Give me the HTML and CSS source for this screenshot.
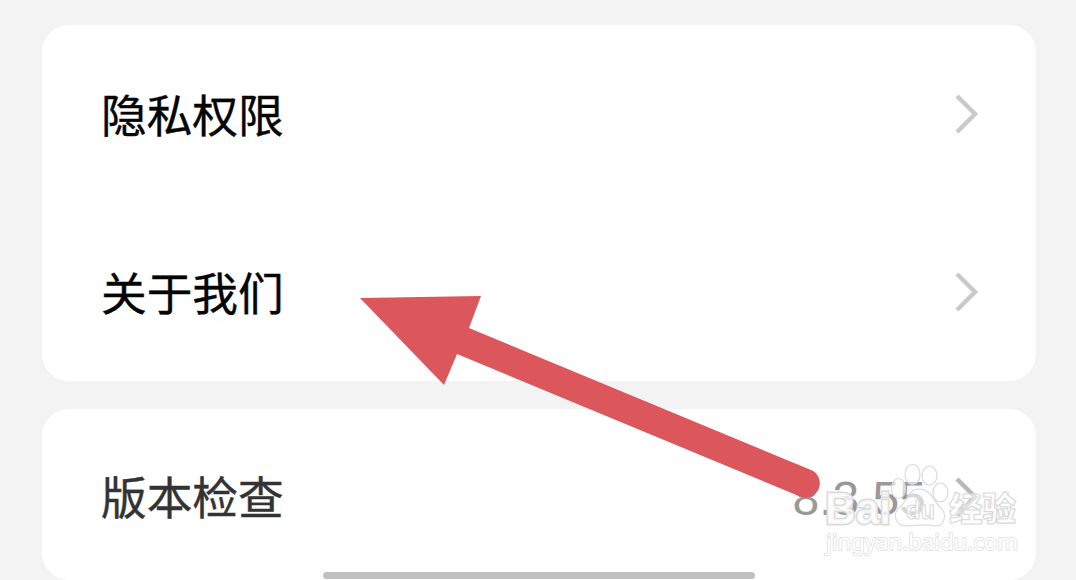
FILE: index.html
```html
<!DOCTYPE html>
<html lang="zh-CN">
<head>
    <meta charset="UTF-8">
    <meta name="viewport" content="width=device-width, initial-scale=1.0">
    <title>设置</title>
    <link rel="stylesheet" href="styles.css">
</head>
<body>

    <div class="container">
        <div class="card">
            <div class="row">
                <span class="label">隐私权限</span>
                <svg class="chevron" viewBox="0 0 26 42"><path d="M3 3 L21 21 L3 39"/></svg>
            </div>
            <div class="row">
                <span class="label">关于我们</span>
                <svg class="chevron" viewBox="0 0 26 42"><path d="M3 3 L21 21 L3 39"/></svg>
            </div>
        </div>
        <div class="card version">
            <div class="row">
                <span class="label">版本检查</span>
                <span class="value">8.3.55</span>
                <svg class="chevron" viewBox="0 0 26 42"><path d="M3 3 L21 21 L3 39"/></svg>
            </div>
        </div>
    </div>

    <div class="home-bar"></div>

    <svg class="arrow" viewBox="0 0 1076 580">
        <path d="M360 298 L481 296 L469 328 L811 470 A14.3 14.3 0 0 1 800 496.500 L457 354 L444 385 Z"/>
    </svg>

    <svg class="watermark" viewBox="0 0 1076 580">
        <text class="brand" x="825" y="524" textLength="66" lengthAdjust="spacingAndGlyphs">Bai</text>
        <g class="paw">
            <ellipse cx="898.500" cy="488.500" rx="7" ry="10"/>
            <ellipse cx="912.500" cy="474.500" rx="7.500" ry="10"/>
            <ellipse cx="929.500" cy="475.500" rx="7.500" ry="9.500"/>
            <ellipse cx="940.500" cy="492.500" rx="7.500" ry="9.500"/>
            <path d="M919 489 C908 489 908 500 901 506 C891 513 895 526 907 526 C914 526 925 523 935 526 C946 526 947 513 940 507 C932 499 931 489 919 489 Z"/>
        </g>
        <text class="du" x="906" y="519" textLength="29" lengthAdjust="spacingAndGlyphs">du</text>
        <text class="jingyan" x="949" y="521" textLength="67" lengthAdjust="spacingAndGlyphs">经验</text>
        <text class="site" x="826" y="550" textLength="192" lengthAdjust="spacingAndGlyphs">jingyan.baidu.com</text>
    </svg>

</body>
</html>
```
FILE: styles.css
```css
body{
    margin: 0;
    height: 580px;
    overflow: hidden;
    position: relative;
    background-color: #f3f3f3;
    font-family: "Noto Sans CJK SC", sans-serif;
}
.container{
    padding: 25px 40px 0 42px;
}
.card{
    background-color: #fff;
    border-radius: 27px;
    margin-bottom: 28px;
}
.row{
    display: flex;
    align-items: center;
    height: 178px;
    padding: 0 56px 0 59px;
}
.label{
    flex: 1;
    font-size: 45.700px;
    line-height: 66px;
    padding-bottom: 2px;
    color: #050505;
    -webkit-text-stroke: 0.400px;
}
.value{
    font-family: "Liberation Sans", sans-serif;
    font-size: 48px;
    line-height: 66px;
    padding-top: 4px;
    color: #999;
    margin-right: 28px;
}
.version{
    height: 171px;
}
.version .label{
    color: #333;
    padding-bottom: 5px;
}
.chevron{
    width: 26px;
    height: 42px;
    fill: none;
    stroke: #cacaca;
    stroke-width: 4.500;
}
.version .row{
    height: 176px;
}
.version .chevron{
    stroke: #b8b8b8;
}
.home-bar{
    position: absolute;
    left: 323px;
    bottom: 1px;
    width: 432px;
    height: 7px;
    border-radius: 4px;
    background-color: #c0c0c0;
}
.arrow,.watermark{
    position: absolute;
    top: 0;
    left: 0;
    width: 1076px;
    height: 580px;
}
.arrow{
    fill: #db575c;
}
.watermark{
    fill: rgba(255, 255, 255, 0.6);
    stroke: #dadada;
    stroke-width: 1.200;
}
.brand{
    font: bold 45px "Liberation Sans", sans-serif;
    fill: rgba(255, 255, 255, 0.75);
    stroke-width: 3;
    paint-order: stroke;
}
.du{
    font: bold 26px "Liberation Sans", sans-serif;
}
.jingyan{
    font: 900 33px "Noto Sans CJK SC", sans-serif;
}
.site{
    font: 22.500px "Noto Sans", sans-serif;
    fill: #fff;
    stroke: #e0e0e0;
    stroke-width: 1.600;
    paint-order: stroke;
    text-rendering: geometricPrecision;
}
```
